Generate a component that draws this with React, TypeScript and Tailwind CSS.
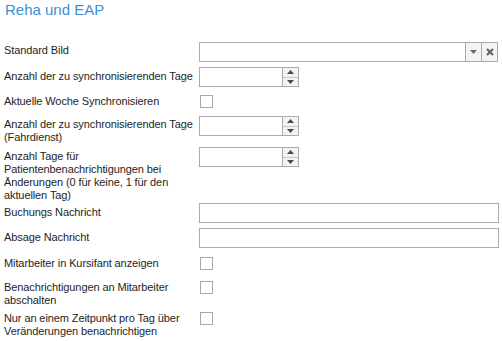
import React from 'react';

const font = { fontFamily: '"Liberation Sans", Arial, sans-serif' };

const Label = ({ lines, pad }: { lines: string[]; pad: string }) => (
  <div className={`w-[195px] shrink-0 text-[11px] leading-[13px] tracking-[-0.1px] text-[#1e1e1e] ${pad}`}>
    {lines.map((l, i) => (
      <div key={i} className="whitespace-nowrap">
        {l}
      </div>
    ))}
  </div>
);

const UpArrow = () => (
  <svg width="7" height="4" viewBox="0 0 7 4">
    <path d="M0 4 L3.5 0 L7 4 Z" fill="#4a4a4a" />
  </svg>
);

const DownArrow = ({ color = '#4a4a4a' }: { color?: string }) => (
  <svg width="7" height="4" viewBox="0 0 7 4">
    <path d="M0 0 L7 0 L3.5 4 Z" fill={color} />
  </svg>
);

const Spinner = () => (
  <div className="flex h-[20px] w-[100px] border border-[#ababab] bg-white">
    <div className="flex-1" />
    <div className="flex w-[16px] flex-col border-l border-[#ababab]">
      <div className="flex flex-1 items-center justify-center bg-[#f3f3f3]">
        <UpArrow />
      </div>
      <div className="flex flex-1 items-center justify-center border-t border-[#c8c8c8] bg-[#f3f3f3]">
        <DownArrow />
      </div>
    </div>
  </div>
);

const Checkbox = () => <div className="ml-[1px] h-[13px] w-[13px] border border-[#a8a8a8] bg-white" />;

const TextBox = () => <div className="h-[20px] w-[300px] border border-[#ababab] bg-white" />;

export default function App() {
  return (
    <div className="h-[341px] w-[502px] bg-white pl-[4px]" style={font}>
      <div className="h-[20px] pl-[1px] text-[15px] leading-[20px] text-[#3d8ed6]">Reha und EAP</div>

      {/* Standard Bild */}
      <div className="mt-[22px] flex">
        <Label lines={['Standard Bild']} pad="pt-[2px]" />
        <div className="flex h-[20px] w-[299px] border border-[#ababab] bg-white">
          <div className="flex-1" />
          <div className="flex w-[16px] items-center justify-center border-l border-[#ababab] bg-[#f3f3f3]">
            <DownArrow color="#6a6a6a" />
          </div>
          <div className="flex w-[16px] items-center justify-center border-l border-[#ababab] bg-[#f3f3f3]">
            <svg width="8" height="8" viewBox="0 0 8 8">
              <path d="M1 1 L7 7 M7 1 L1 7" stroke="#606060" strokeWidth="2" />
            </svg>
          </div>
        </div>
      </div>

      <div className="mt-[5px] flex">
        <Label lines={['Anzahl der zu synchronisierenden Tage']} pad="pt-[3px]" />
        <Spinner />
      </div>

      <div className="mt-[8px] flex">
        <Label lines={['Aktuelle Woche Synchronisieren']} pad="" />
        <Checkbox />
      </div>

      <div className="mt-[8px] flex">
        <Label lines={['Anzahl der zu synchronisierenden Tage', '(Fahrdienst)']} pad="pt-[2px]" />
        <Spinner />
      </div>

      <div className="mt-[3px] flex">
        <Label
          lines={[
            'Anzahl Tage für',
            'Patientenbenachrichtigungen bei',
            'Änderungen (0 für keine, 1 für den',
            'aktuellen Tag)',
          ]}
          pad="pt-[3px]"
        />
        <Spinner />
      </div>

      <div className="mt-[1px] flex">
        <Label lines={['Buchungs Nachricht']} pad="pt-[3px]" />
        <TextBox />
      </div>

      <div className="mt-[5px] flex">
        <Label lines={['Absage Nachricht']} pad="pt-[3px]" />
        <TextBox />
      </div>

      <div className="mt-[9px] flex">
        <Label lines={['Mitarbeiter in Kursifant anzeigen']} pad="" />
        <Checkbox />
      </div>

      <div className="mt-[11px] flex">
        <Label lines={['Benachrichtigungen an Mitarbeiter', 'abschalten']} pad="" />
        <Checkbox />
      </div>

      <div className="mt-[5px] flex">
        <Label lines={['Nur an einem Zeitpunkt pro Tag über', 'Veränderungen benachrichtigen']} pad="" />
        <Checkbox />
      </div>
    </div>
  );
}
